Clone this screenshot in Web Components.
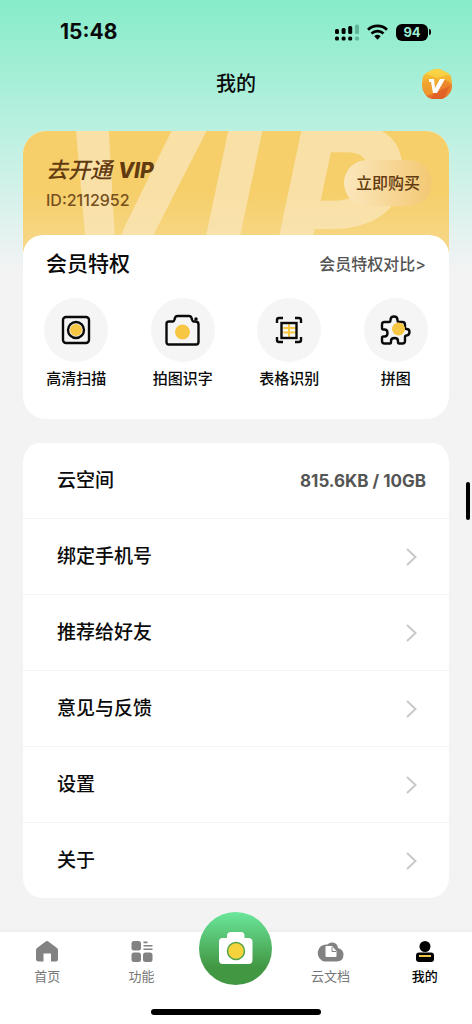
<!DOCTYPE html>
<html lang="zh-CN">
<head>
<meta charset="utf-8">
<meta name="viewport" content="width=device-width, initial-scale=1">
<title>我的</title>
<style>
  html { height: 100%; }
  body {
    margin: 0;
    min-height: 100%;
    font-family: Inter, "Noto Sans CJK SC", sans-serif;
    color: #0a0a0a;
    background: #f3f3f4;
  }
</style>
</head>
<body>
<profile-page></profile-page>

<script>
const define = (name, html) => {
  const template = document.createElement('template');
  template.innerHTML = html;
  customElements.define(name, class extends HTMLElement {
    constructor() {
      super();
      this.attachShadow({ mode: 'open' }).append(template.content.cloneNode(true));
    }
  });
};

define('status-bar', `
<style>
  :host { display: flex; justify-content: space-between; align-items: center; height: 64px; padding: 0 41px 0 60px; }
  time { font-size: 21px; font-weight: 700; line-height: 24px; }
  .icons { display: flex; align-items: center; gap: 8px; }
  svg { display: block; }
  .battery { display: flex; align-items: center; }
  .level { width: 32px; height: 17px; border-radius: 6px; background: #000; color: #9eeed5; font-size: 13px; line-height: 17px; font-weight: 700; text-align: center; }
  .tip { width: 2px; height: 6px; margin-left: 1px; border-radius: 0 2px 2px 0; background: #000; }
</style>
<time>15:48</time>
<div class="icons">
  <svg width="24" height="17" viewBox="0 0 24 17" aria-label="信号">
    <g fill="#000"><rect y="5" width="4" height="5" rx="1.5"/><rect y="12.500" width="4" height="4" rx="1.5"/>
    <rect x="6.600" y="4" width="4" height="6" rx="1.5"/><rect x="6.600" y="12.500" width="4" height="4" rx="1.5"/>
    <rect x="13.200" y="2" width="4" height="8" rx="1.5"/><rect x="13.200" y="12.500" width="4" height="4" rx="1.5"/></g>
    <g fill="#5fb699"><rect x="20" y="0.500" width="4" height="9.500" rx="1.5"/><rect x="20" y="12.500" width="4" height="4" rx="1.5"/></g>
  </svg>
  <svg width="21" height="16" viewBox="0 0 21 16" aria-label="无线网络">
    <g fill="none" stroke="#000" stroke-width="2.700"><path d="M1 5.700a13.700 13.700 0 0 1 19 0"/><path d="M4.500 9.500a8.700 8.700 0 0 1 12 0"/></g>
    <path d="M7.300 12.300a4.700 4.700 0 0 1 6.400 0L10.500 15.800z"/>
  </svg>
  <div class="battery"><span class="level">94</span><span class="tip"></span></div>
</div>`);

define('page-header', `
<style>
  :host { display: grid; grid-template-columns: 1fr auto 1fr; align-items: center; height: 40px; padding: 0 19px; }
  h1 { grid-column: 2; margin: 0; font-size: 20px; line-height: 28px; font-weight: 500; }
  button { justify-self: end; border: 0; padding: 0; background: none; }
  svg { display: block; }
</style>
<h1><slot></slot></h1>
<button type="button" aria-label="会员">
  <svg width="32" height="32" viewBox="0 0 32 32">
    <defs><linearGradient id="g" x1="0" y1="0" x2="0" y2="1"><stop stop-color="#f8d23d"/><stop offset=".5" stop-color="#f4a62d"/><stop offset="1" stop-color="#e5602a"/></linearGradient>
    <clipPath id="c"><path d="M11 2Q16-.5 21 2l6 3q3 2 3.500 6l.5 6q0 6-3 9-3 4-7 5H11q-5-1-7-5-3-4-3-9l.5-6Q2 7 5 5z"/></clipPath></defs>
    <g clip-path="url(#c)"><path fill="url(#g)" d="M0 0h32v32H0z"/>
    <path fill="#e8792b" opacity=".65" d="M23 11l9 6v15H19l-7-7z"/><path fill="#efa32d" opacity=".7" d="M0 14l9-2 4 13-8 3z"/><path fill="#fbdf52" opacity=".5" d="M3 5l13-4 13 5-13 4z"/><path fill="#db5427" opacity=".6" d="M13 25l16-7-7 14H10z"/></g>
    <path fill="#fff" d="M8 11h5l1 9 5-9h5l-8 14h-4l-2-11H8z"/>
  </svg>
</button>`);

define('vip-banner', `
<style>
  :host { display: flex; position: relative; overflow: hidden; justify-content: space-between; align-items: center; height: 104px; padding: 0 17px 20px 23px; margin-bottom: -20px; background: linear-gradient(#f6cf6b 50%, #f6d98c); color: #623a10; }
  .mark { position: absolute; top: -52px; left: 32px; color: #fae6bb; opacity: .75; font: italic 700 228px/240px "Open Sans", sans-serif; white-space: nowrap; }
  .user { position: relative; }
  h2 { margin: 0; font-size: 22px; line-height: 32px; font-style: italic; font-weight: 500; }
  b { font-size: 21px; font-weight: 800; }
  p { margin: 0; font-size: 16px; line-height: 26px; font-weight: 500; color: #76501e; }
  button { position: relative; border: 0; border-radius: 23px; width: 88px; height: 46px; padding: 0; font: 500 16px/24px Inter, "Noto Sans CJK SC", sans-serif; color: #623a10; background: linear-gradient(90deg, #fbe7bd, #f3c873); }
</style>
<span class="mark" aria-hidden="true">VIP</span>
<div class="user"><h2>去开通 <b>VIP</b></h2><p>ID:2112952</p></div>
<button type="button">立即购买</button>`);

define('feature-item', `
<style>
  :host { display: block; }
  button { display: flex; flex-direction: column; align-items: center; gap: 6px; width: 100%; padding: 0; border: 0; background: none; color: #0a0a0a; font: 500 15px/22px Inter, "Noto Sans CJK SC", sans-serif; }
  .disc { display: grid; place-items: center; width: 64px; height: 64px; border-radius: 50%; background: #f5f5f5; }
</style>
<button type="button"><span class="disc"><slot name="icon"></slot></span><span><slot></slot></span></button>`);

define('member-card', `
<style>
  :host { display: block; border-radius: 23px; overflow: hidden; background: #fff; }
  section { position: relative; border-radius: 20px 20px 0 0; background: #fff; padding-bottom: 29px; }
  header { display: flex; justify-content: space-between; align-items: center; height: 58px; padding: 0 23px; }
  h2 { margin: 0; font-size: 21px; line-height: 30px; font-weight: 500; }
  a { color: #555; font-size: 16px; line-height: 24px; font-weight: 500; text-decoration: none; }
  .grid { display: grid; grid-template-columns: repeat(4, 1fr); padding-top: 5px; }
  svg { display: block; fill: none; stroke: #0a0a0a; stroke-width: 2.400; stroke-linejoin: round; stroke-linecap: round; }
  .y { fill: #f7c744; stroke: none; }
</style>
<vip-banner></vip-banner>
<section>
  <header><h2>会员特权</h2><a href="#compare">会员特权对比&gt;</a></header>
  <div class="grid">
    <feature-item><svg slot="icon" width="36" height="36" viewBox="0 0 36 36"><rect x="5" y="5" width="26" height="26" rx="3"/><circle class="y" cx="18" cy="18" r="6"/><circle cx="18" cy="18" r="8"/></svg>高清扫描</feature-item>
    <feature-item><svg slot="icon" width="36" height="36" viewBox="0 0 36 36"><path d="M4 9.500h4q1 0 1.500-2l.5-1.500q.5-2 2.500-2H24q2 0 2.500 2l.5 1.500q.5 2 1.500 2h2q3 0 3 3v17.500q0 2.500-2.500 2.500H4q-2.500 0-2.500-2.500V12q0-2.500 2.500-2.500z"/><circle class="y" cx="17.500" cy="20" r="7.500"/><circle cx="31" cy="7" r="1" fill="#0a0a0a" stroke-width="1.500"/></svg>拍图识字</feature-item>
    <feature-item><svg slot="icon" width="36" height="36" viewBox="0 0 36 36"><path d="M6 11V8q0-2 2-2h4M24 6h4q2 0 2 2v3M30 25v3q0 2-2 2h-4M12 30H8q-2 0-2-2v-3" stroke-linecap="butt"/><path d="M18 12v13M13 16h11M13 20.500h11" stroke="#f7c744" stroke-width="2"/><rect x="10.500" y="11" width="15" height="15" stroke-linejoin="miter"/></svg>表格识别</feature-item>
    <feature-item><svg slot="icon" width="36" height="36" viewBox="2 0 36 36"><path d="M8.500 10H13q1.500 0 1.500-2Q14.500 4.500 18 4.500T21.500 8q0 2 1.500 2h3.500q2.500 0 2.500 3v3q0 1 1.500 1 3 0 3 3t-3 3.500Q29 23.500 29 25v4q0 2.500-2.500 2.500H23q-1 0-1-1.500v-1q0-3-3.500-3T15 29v1q0 1.500-1 1.500H8.500Q6 31.500 6 29v-3q0-1.500 1.500-1.500h1q3 0 3-3.500t-3-3.500h-1Q6 17.500 6 16v-3.500Q6 10 8.500 10z"/><circle class="y" cx="22.500" cy="17" r="6.500"/></svg>拼图</feature-item>
  </div>
</section>`);

customElements.define('menu-item', class extends HTMLElement {
  constructor() {
    super();
    const link = this.getAttribute('href');
    this.attachShadow({ mode: 'open' }).innerHTML = `
<style>
  :host { display: block; border-top: 1px solid #f3f3f3; }
  :host(:first-child) { border-top-color: transparent; }
  .row { display: flex; justify-content: space-between; align-items: center; height: 75px; padding: 0 23px 0 34px; color: #0a0a0a; text-decoration: none; font-size: 19px; line-height: 28px; font-weight: 500; }
  a.row { padding-right: 31px; }
  svg { display: block; }
</style>` + (link
  ? `<a class="row" href="${link}"><slot></slot><svg width="14" height="20" viewBox="0 0 14 20" fill="none" stroke="#c9c9c9" stroke-width="2"><path d="M3 2l8.500 8L3 18"/></svg></a>`
  : `<div class="row"><span><slot></slot></span><slot name="value"></slot></div>`);
  }
});

define('menu-card', `
<style>
  :host { display: block; border-radius: 20px; overflow: hidden; background: #fff; }
  strong { font-size: 17px; line-height: 24px; font-weight: 700; color: #555; }
</style>
<menu-item>云空间<strong slot="value">815.6KB / 10GB</strong></menu-item>
<menu-item href="#phone">绑定手机号</menu-item>
<menu-item href="#share">推荐给好友</menu-item>
<menu-item href="#feedback">意见与反馈</menu-item>
<menu-item href="#settings">设置</menu-item>
<menu-item href="#about">关于</menu-item>`);

define('tab-item', `
<style>
  :host { display: block; color: #777; }
  :host([active]) { color: #000; font-weight: 500; }
  a { display: flex; flex-direction: column; align-items: center; gap: 3px; padding-top: 8px; color: inherit; text-decoration: none; font-size: 13px; line-height: 20px; }
</style>
<a href="#tab"><slot name="icon"></slot><span><slot></slot></span></a>`);

define('tab-bar', `
<style>
  :host { display: block; background: #fff; box-shadow: 0 -1px 5px rgba(0,0,0,.04); }
  nav { display: grid; grid-template-columns: repeat(5, 1fr); height: 77px; }
  svg { display: block; }
  .scan { justify-self: center; width: 73px; height: 73px; margin-top: -20px; padding: 0; border: 0; border-radius: 50%; display: grid; place-items: center; background: linear-gradient(#6be79b, #429743 75%); }
  .home { width: 170px; height: 6px; margin: 0 auto; border-radius: 3px; background: #000; }
  footer { height: 15px; }
</style>
<nav>
  <tab-item><svg slot="icon" width="28" height="23" viewBox="0 0 28 23"><path fill="#828282" d="M14 1q1 0 2 1l8 6q1 1 1 2v9q0 2.500-2.500 2.500H18v-8h-7.500v8H6Q3 21.500 3 19v-9q0-1 1-2l8-6q1-1 2-1z"/></svg>首页</tab-item>
  <tab-item><svg slot="icon" width="28" height="23" viewBox="0 0 28 23" fill="#828282"><rect x="3.500" y="1" width="9.500" height="9.500" rx="2.500"/><rect x="3.500" y="12.500" width="9.500" height="9.500" rx="2.500"/><rect x="15" y="12.500" width="9.500" height="9.500" rx="2.500"/><path d="M15.500 1.500h4v1.800h-4zM15.500 5h9v1.500h-9zM15.500 8.500h9V10h-9z"/></svg>功能</tab-item>
  <button class="scan" type="button" aria-label="拍照"><svg width="40" height="40" viewBox="0 0 40 40"><path fill="#fff" d="M6.500 9H11V7q0-4 4-4h10q3.500 0 3.500 4v2h4q4 0 4 4v18q0 4-4 4h-26q-3.500 0-3.500-4V13q0-4 3.500-4z"/><circle cx="20" cy="22" r="8.500" fill="#f6d33d" stroke="#51a54b" stroke-width="1.500"/></svg></button>
  <tab-item><svg slot="icon" width="28" height="23" viewBox="0 0 28 23"><path fill="#828282" d="M9 21.500a8.500 8.500 0 1 1 2.500-17A6 6 0 0 1 22 8q5.500 1.500 5.500 6.500 0 7-7 7z"/><path fill="#fff" d="M10.500 6H16l4.500 5v5q0 1-1 1h-9q-1 0-1-1V7q0-1 1-1z"/><path d="M16 7v4.500h4" fill="none" stroke="#828282" stroke-width="1"/></svg>云文档</tab-item>
  <tab-item active><svg slot="icon" width="28" height="23" viewBox="0 0 28 23"><circle cx="14" cy="6.500" r="5.500"/><rect x="5" y="12.500" width="18" height="9.500" rx="3"/><path d="M8 16h12" stroke="#f2c849" stroke-width="2"/></svg>我的</tab-item>
</nav>
<footer><div class="home"></div></footer>`);

define('profile-page', `
<style>
  :host { display: flex; flex-direction: column; position: relative; min-height: 100vh; background: linear-gradient(#86ecc9 0, #b7f0df 122px, #f3f3f4 270px); }
  main { display: flex; flex-direction: column; gap: 23px; padding: 27px 23px; flex: 1; }
  .thumb { position: absolute; top: 482px; right: 2px; width: 4px; height: 38px; border-radius: 2px; background: #000; }
</style>
<status-bar></status-bar>
<page-header>我的</page-header>
<main><member-card></member-card><menu-card></menu-card></main>
<tab-bar></tab-bar>
<div class="thumb"></div>`);
</script>
</body>
</html>
